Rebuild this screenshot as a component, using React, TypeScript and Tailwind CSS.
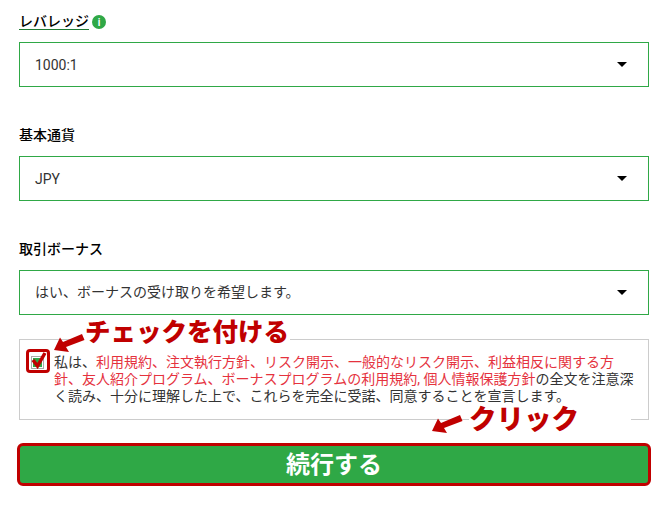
import React from 'react';

const FONT = "font-['Roboto','Noto_Sans_CJK_JP',sans-serif]";

function Caret() {
  return <span className="ml-auto mr-[21px] w-0 h-0 border-x-[5px] border-x-transparent border-t-[5px] border-t-black" />;
}

function SelectBox({ value, latin }: { value: string; latin?: boolean }) {
  return (
    <div className="flex items-center h-[45px] border border-[#2fa846] pl-[15px] text-[14px] text-[#333] bg-white">
      <span className={latin ? 'mt-[2px]' : ''}>{value}</span>
      <Caret />
    </div>
  );
}

function Arrow({ className }: { className: string }) {
  return (
    <svg viewBox="0 0 32 20" className={className}>
      <path d="M1 17 L7 4.5 L10 9 L29 1 L31.5 7 L13 14 L16 19 Z" fill="#c00000" />
    </svg>
  );
}

export default function App() {
  const link = 'text-[#e5323e]';
  return (
    <div className={`${FONT} relative w-[661px] h-[508px] overflow-hidden bg-white`}>
      <div className="flex flex-col pl-[19px] pr-[12px] pt-[13px]">
        <div className="flex items-center h-[18px] mb-[11px] text-[14px] font-medium text-black">
          <span className="border-b border-[#1f7a33] leading-[15px]">レバレッジ</span>
          <span className="ml-[3px] flex items-center justify-center w-[14px] h-[14px] rounded-full bg-[#2fa846] text-white text-[10px] font-bold">i</span>
        </div>
        <SelectBox value="1000:1" latin />

        <div className="h-[18px] mt-[39px] mb-[12px] text-[14px] leading-[18px] font-medium text-black">基本通貨</div>
        <SelectBox value="JPY" latin />

        <div className="h-[18px] mt-[39px] mb-[12px] text-[14px] leading-[18px] font-medium text-black">取引ボーナス</div>
        <SelectBox value="はい、ボーナスの受け取りを希望します。" />

        <div className="flex mt-[24px] h-[81px] border border-[#ccc] pl-[11px] pr-[14px] pt-[14px]">
          <span className="mt-[2px] shrink-0 flex items-center justify-center w-[13px] h-[13px] border border-[#aaa] bg-white">
            <span className="w-[9px] h-[9px] bg-[#2fa846]" />
          </span>
          <p className="ml-[10px] text-[14px] leading-[17px] [text-spacing-trim:space-all] text-[#333]">
            私は、<span className={link}>利用規約、注文執行方針、リスク開示、一般的なリスク開示、利益相反に関する方針、友人紹介プログラム、ボーナスプログラムの利用規約, 個人情報保護方針</span>の全文を注意深く読み、十分に理解した上で、これらを完全に受諾、同意することを宣言します。
          </p>
        </div>

        <button className="mt-[23px] -ml-[2px] w-[634px] h-[43px] rounded-[6px] border-[3px] border-[#c00000] bg-[#2fa846] text-white text-[24px] font-bold">
          続行する
        </button>
      </div>

      <div className="absolute left-[26px] top-[349px] w-[24px] h-[24px] rounded-[4px] border-[3px] border-[#c00000]" />
      <svg viewBox="0 0 18 18" className="absolute left-[29px] top-[351px] w-[18px] h-[18px]">
        <path d="M4 9 L8.5 15 L16 2" fill="none" stroke="#c00000" strokeWidth="3.5" />
      </svg>

      <div className="absolute left-[84px] top-[315px] h-[34px] px-[1px] bg-white text-[25.5px] leading-[34px] font-black text-[#c00000] whitespace-nowrap">チェックを付ける</div>
      <Arrow className="absolute left-[53px] top-[333px] w-[32px] h-[20px]" />

      <div className="absolute left-[469px] top-[403px] h-[34px] w-[162px] bg-white text-[27.5px] leading-[34px] font-black text-[#c00000] whitespace-nowrap">クリック</div>
      <Arrow className="absolute left-[431px] top-[414px] w-[32px] h-[20px]" />
    </div>
  );
}
